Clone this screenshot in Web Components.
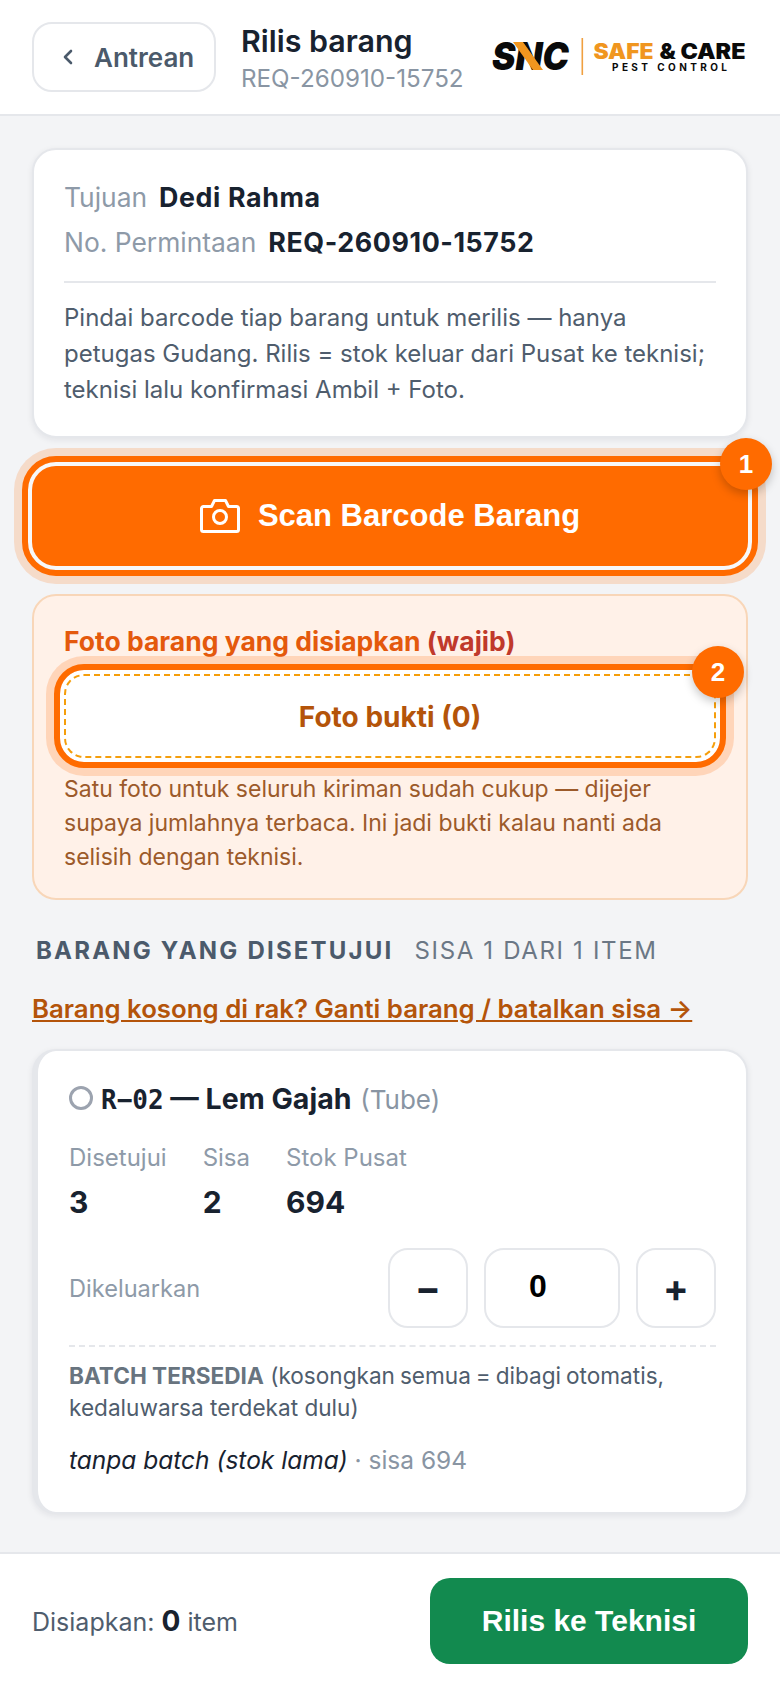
<!DOCTYPE html>
<html lang="id">
<head>
<meta charset="utf-8">
<title>Rilis barang</title>
<style>
  html, body { margin: 0; height: 100%; background: #f3f4f6; }
  body { font-family: Inter, "Liberation Sans", sans-serif; color: #18222f; }
</style>
</head>
<body>
<release-page>
  <top-bar slot="top" title="Rilis barang" code="REQ-260910-15752"></top-bar>
  <info-card></info-card>
  <scan-button>Scan Barcode Barang</scan-button>
  <photo-panel></photo-panel>
  <item-list></item-list>
  <bottom-bar slot="bottom"></bottom-bar>
</release-page>

<script>
// small helper so every element only has to hand over its markup
class Base extends HTMLElement {
  constructor() {
    super();
    this.attachShadow({ mode: 'open' });
    this.shadowRoot.innerHTML = this.markup();
  }
  markup() { return ''; }
}

class ReleasePage extends Base {
  markup() {
    return `
      <style>
        :host { display: flex; flex-direction: column; height: 1688px; overflow: hidden; background: #f3f4f6; }
        main { flex: 1; padding: 32px 32px 0; min-height: 0; }
      </style>
      <slot name="top"></slot>
      <main><slot></slot></main>
      <slot name="bottom"></slot>`;
  }
}

class SncLogo extends Base {
  markup() {
    return `
      <style>
        :host { display: block; flex: none; width: 256px; height: 40px; }
        svg { display: block; overflow: visible; }
        text { font-family: Inter, "Liberation Sans", sans-serif; }
      </style>
      <svg width="256" height="40" viewBox="0 0 256 40">
        <text x="2" y="33" font-size="38" font-weight="900" font-style="italic" fill="#0a0a0a" textLength="77" lengthAdjust="spacingAndGlyphs">SNC</text>
        <polygon points="23,5 33,5 53,33 43,33" fill="#f0961f"/>
        <rect x="91.5" y="1" width="1.6" height="37" fill="#f0a040"/>
        <text x="103.5" y="22" font-size="21" font-weight="900" fill="#f0961f" textLength="60" lengthAdjust="spacingAndGlyphs">SAFE</text>
        <text x="169.5" y="22" font-size="21" font-weight="900" fill="#0a0a0a" textLength="86" lengthAdjust="spacingAndGlyphs">&amp; CARE</text>
        <text x="122" y="34" font-size="10" font-weight="700" fill="#0a0a0a" textLength="115">PEST CONTROL</text>
      </svg>`;
  }
}

class TopBar extends Base {
  markup() {
    return `
      <style>
        :host { display: flex; align-items: center; height: 116px; box-sizing: border-box; padding: 0 34px 0 32px; background: #fff; border-bottom: 2px solid #e5e7eb; flex: none; }
        .back { display: flex; align-items: center; gap: 18px; box-sizing: border-box; width: 184px; height: 70px; padding-left: 26px; border: 2px solid #e5e7eb; border-radius: 20px; font-size: 26px; font-weight: 600; color: #4b5a6b; flex: none; }
        .back svg { display: block; }
        .titles { margin-left: 25px; flex: 1; padding-top: 2px; white-space: nowrap; }
        h1 { margin: 0; font-size: 30.4px; line-height: 36px; font-weight: 600; color: #18222f; }
        p { margin: 5px 0 0; font-size: 24.2px; line-height: 30px; color: #8995a3; }
      </style>
      <div class="back">
        <svg width="16" height="24" viewBox="0 0 16 24" fill="none" stroke="#4b5a6b" stroke-width="2.6" stroke-linecap="round" stroke-linejoin="round"><path d="M11 6 5 12l6 6"/></svg>
        Antrean
      </div>
      <div class="titles"><h1>${this.getAttribute('title') || 'Rilis barang'}</h1><p>REQ-260910-15752</p></div>
      <snc-logo></snc-logo>`;
  }
}

class InfoCard extends Base {
  markup() {
    return `
      <style>
        :host { display: block; box-sizing: border-box; height: 290px; padding: 24px 30px 0; background: #fff; border: 2px solid #e5e7eb; border-radius: 24px; box-shadow: 0 2px 6px rgba(20,30,50,.08); }
        .row { display: flex; align-items: center; gap: 12px; height: 45px; font-size: 26.4px; color: #8e9aa8; font-weight: 400; }
        b { font-weight: 700; color: #18222f; font-size: 26.8px; letter-spacing: .6px; }
        hr { border: 0; border-top: 2px solid #e5e7eb; margin: 17px 0 17px; }
        p { margin: 0; font-size: 24px; line-height: 36px; color: #4f5d6d; white-space: nowrap; }
      </style>
      <div class="row">Tujuan <b>Dedi Rahma</b></div>
      <div class="row">No. Permintaan <b>REQ-260910-15752</b></div>
      <hr>
      <p>Pindai barcode tiap barang untuk merilis — hanya<br>petugas Gudang. Rilis = stok keluar dari Pusat ke teknisi;<br>teknisi lalu konfirmasi Ambil + Foto.</p>`;
  }
}

class StepBadge extends Base {
  markup() {
    return `
      <style>
        :host { position: absolute; display: flex; align-items: center; justify-content: center; width: 52px; height: 52px; border-radius: 50%; background: #ff6b00; color: #fff; font: 700 26px "Liberation Sans", sans-serif; box-shadow: 0 4px 10px rgba(0,0,0,.22); z-index: 2; }
      </style>
      <slot></slot>`;
  }
}

class ScanButton extends Base {
  markup() {
    return `
      <style>
        :host { display: block; position: relative; margin-top: 28px; }
        .btn { display: flex; align-items: center; justify-content: center; gap: 18px; height: 100px; background: #ff6b00; border-radius: 24px; color: #fff; font: 700 31px "Liberation Sans", sans-serif; outline: 6px solid #ff6b00; outline-offset: 4px; box-shadow: 0 0 0 4px #f7f8f9, 0 0 0 18px rgba(255,107,0,.18); }
        step-badge { top: -28px; right: -24px; }
      </style>
      <div class="btn">
        <svg width="40" height="36" viewBox="0 0 40 36" fill="none" stroke="#fff" stroke-width="3" stroke-linejoin="round"><path d="M3.5 8.5h8l3-6h11l3 6h8a2 2 0 0 1 2 2v21a2 2 0 0 1-2 2h-33a2 2 0 0 1-2-2v-21a2 2 0 0 1 2-2z"/><circle cx="20" cy="19" r="6.5"/></svg>
        <slot></slot>
      </div>
      <step-badge>1</step-badge>`;
  }
}

class PhotoPanel extends Base {
  markup() {
    return `
      <style>
        :host { display: block; box-sizing: border-box; height: 306px; margin-top: 28px; padding: 29px 30px 0; background: #fff1e8; border: 2px solid #f8d6b8; border-radius: 24px; }
        h3 { margin: 0; font-size: 26.5px; line-height: 32px; font-weight: 700; color: #e4590c; white-space: nowrap; }
        h3 span { color: #c0392b; }
        .wrap { position: relative; margin-top: 17px; }
        .btn { display: flex; align-items: center; justify-content: center; box-sizing: border-box; height: 84px; padding-top: 2px; background: #fff; border: 2px dashed #f59e0b; border-radius: 20px; font: 700 28px Inter, sans-serif; color: #b4540a; outline: 6px solid #ff6b00; outline-offset: 4px; box-shadow: 0 0 0 4px #fff, 0 0 0 18px rgba(255,107,0,.2); }
        step-badge { top: -28px; right: -28px; }
        p { margin: 14px 0 0; font-size: 23px; line-height: 34px; color: #9c5a2a; white-space: nowrap; }
      </style>
      <h3>Foto barang yang disiapkan <span>(wajib)</span></h3>
      <div class="wrap"><div class="btn">Foto bukti (0)</div><step-badge>2</step-badge></div>
      <p>Satu foto untuk seluruh kiriman sudah cukup — dijejer<br>supaya jumlahnya terbaca. Ini jadi bukti kalau nanti ada<br>selisih dengan teknisi.</p>`;
  }
}

class QtyStepper extends Base {
  markup() {
    return `
      <style>
        :host { display: flex; gap: 16px; }
        div { display: flex; align-items: center; justify-content: center; box-sizing: border-box; width: 80px; height: 80px; border: 2px solid #e5e7eb; border-radius: 20px; background: #fff; font: 700 38px Inter, sans-serif; color: #18222f; }
        .val { width: 136px; padding: 0 28px 3px 0; color: #000; font: 700 32px "Liberation Sans", sans-serif; }
      </style>
      <div>−</div><div class="val">0</div><div>+</div>`;
  }
}

class ItemList extends Base {
  markup() {
    return `
      <style>
        :host { display: block; margin-top: 35px; }
        .head { display: flex; align-items: baseline; gap: 21px; padding-left: 4px; font-size: 24px; line-height: 32px; letter-spacing: 1.65px; color: #6b7785; white-space: nowrap; }
        .head b { font-weight: 700; color: #4b5a6b; letter-spacing: 2.2px; }
        a { display: block; margin-top: 26px; font-size: 25.8px; line-height: 32px; font-weight: 600; color: #b4540a; text-decoration: underline; white-space: nowrap; }
        .card { box-sizing: border-box; height: 465px; margin-top: 24px; padding: 31px 30px 0 31px; background: #fff; border: 2px solid #e5e7eb; border-left-width: 6px; border-radius: 24px; box-shadow: 0 2px 6px rgba(20,30,50,.08); }
        .title { display: flex; align-items: center; gap: 8px; height: 32px; font-size: 28.5px; font-weight: 700; color: #18222f; white-space: nowrap; }
        .dot { box-sizing: border-box; width: 24px; height: 24px; border: 3px solid #9ca3af; border-radius: 50%; }
        code { font: 700 26px "DejaVu Sans Mono", monospace; }
        small { font-size: 26px; font-weight: 400; color: #8995a3; margin-left: 2px; }
        .stats { display: flex; gap: 36px; margin-top: 29px; }
        .stats span { display: block; font-size: 24px; line-height: 30px; color: #8e9aa8; }
        .stats b { display: block; margin-top: 12px; font-size: 30px; line-height: 34px; font-weight: 700; color: #18222f; }
        .qty { display: flex; align-items: center; justify-content: space-between; margin-top: 29px; padding-bottom: 17px; border-bottom: 2px dashed #e5e7eb; font-size: 23.6px; color: #8e9aa8; }
        .batch { margin: 13px 0 0; font-size: 22.6px; line-height: 32px; color: #4f5d6d; white-space: nowrap; }
        .batch b { font-weight: 700; color: #68747f; }
        .batch span { word-spacing: -1.4px; }
        .left { margin: 20px 0 0; font-size: 24.5px; line-height: 32px; color: #8995a3; white-space: nowrap; }
        .left i { color: #18222f; }
      </style>
      <div class="head"><b>BARANG YANG DISETUJUI</b><span>SISA 1 DARI 1 ITEM</span></div>
      <a>Barang kosong di rak? Ganti barang / batalkan sisa →</a>
      <div class="card">
        <div class="title"><span class="dot"></span><span><code>R−02</code> — Lem Gajah <small>(Tube)</small></span></div>
        <div class="stats">
          <div><span>Disetujui</span><b>3</b></div>
          <div><span>Sisa</span><b>2</b></div>
          <div><span>Stok Pusat</span><b>694</b></div>
        </div>
        <div class="qty">Dikeluarkan <qty-stepper></qty-stepper></div>
        <p class="batch"><b>BATCH TERSEDIA</b> <span>(kosongkan semua = dibagi otomatis,</span><br>kedaluwarsa terdekat dulu)</p>
        <p class="left"><i>tanpa batch (stok lama)</i> · sisa 694</p>
      </div>`;
  }
}

class BottomBar extends Base {
  markup() {
    return `
      <style>
        :host { display: flex; flex: none; align-items: center; justify-content: space-between; box-sizing: border-box; height: 136px; padding: 0 32px; background: #fff; border-top: 2px solid #e5e7eb; }
        .count { font-size: 25px; color: #4f5d6d; }
        .count b { font-size: 28px; font-weight: 700; color: #18222f; }
        .go { display: flex; align-items: center; justify-content: center; width: 318px; height: 86px; background: #128a4f; color: #fff; border-radius: 20px; font: 700 30px "Liberation Sans", sans-serif; }
      </style>
      <div class="count">Disiapkan: <b>0</b> item</div>
      <div class="go">Rilis ke Teknisi</div>`;
  }
}

customElements.define('release-page', ReleasePage);
customElements.define('snc-logo', SncLogo);
customElements.define('top-bar', TopBar);
customElements.define('info-card', InfoCard);
customElements.define('step-badge', StepBadge);
customElements.define('scan-button', ScanButton);
customElements.define('photo-panel', PhotoPanel);
customElements.define('qty-stepper', QtyStepper);
customElements.define('item-list', ItemList);
customElements.define('bottom-bar', BottomBar);
</script>
</body>
</html>
